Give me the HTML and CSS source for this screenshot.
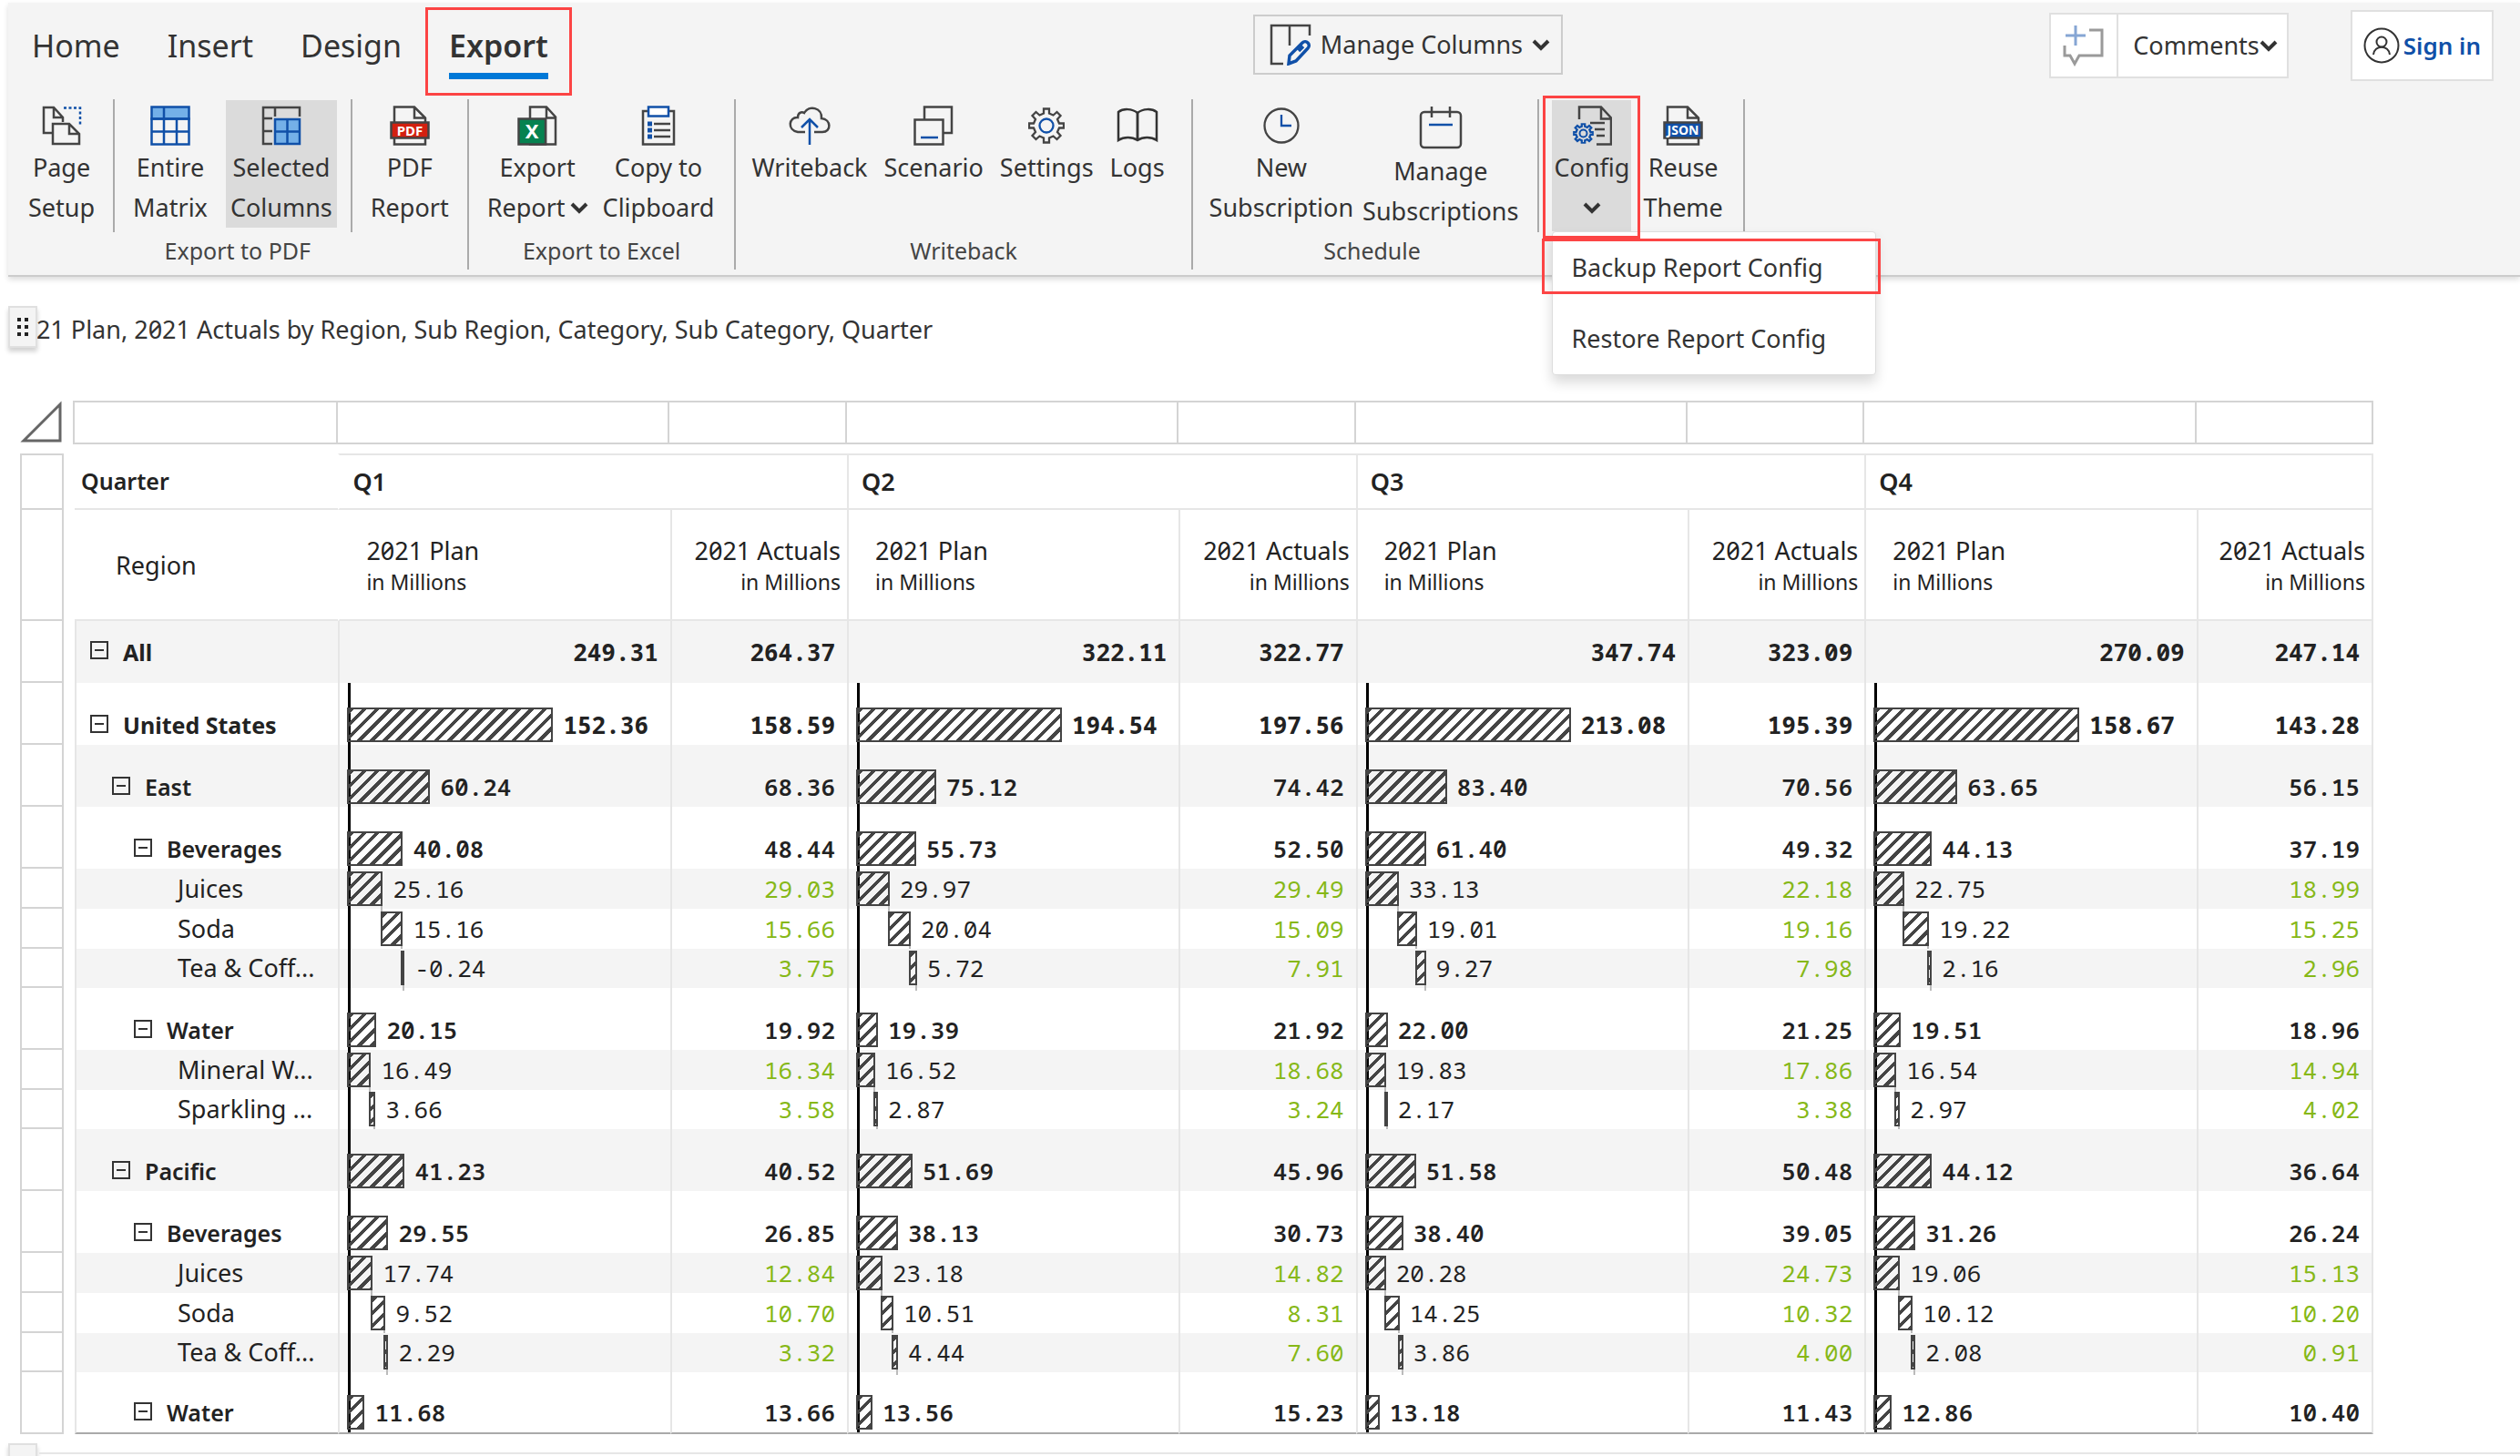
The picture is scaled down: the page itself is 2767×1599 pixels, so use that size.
FILE: index.html
```html
<!DOCTYPE html>
<html lang="en">
<head>
<meta charset="utf-8">
<title>Matrix report</title>
<link rel="stylesheet" href="styles.css">
</head>
<body>
<svg class="defs" aria-hidden="true">
  <symbol id="chevron" viewBox="0 0 20 13"><path d="M2 2l8 8 8-8" fill="none" stroke="#333" stroke-width="4"/></symbol>
  <symbol id="gear" viewBox="0 0 40 40"><path d="M17 1.500h6v5l4.500 2 4-3.500 4 4-3.500 4 2 4.500h5v5h-5l-2 4.500 3.500 4-4 4-4-3.500-4.500 2v5h-6v-5l-4.500-2-4 3.500-4-4 3.500-4-2-4.500h-5v-5h5l2-4.500-3.500-4 4-4 4 3.500 4.500-2z"/></symbol>
</svg>

<header class="ribbon">
  <div class="topbar">
    <nav class="tabs">
      <button class="tab">Home</button>
      <button class="tab">Insert</button>
      <button class="tab">Design</button>
      <button class="tab active">Export</button>
    </nav>
    <div class="space-before"></div>
    <button class="box manage">
      <svg width="46" height="46" viewBox="0 0 46 46" fill="none" stroke="#444" stroke-width="2.500"><path d="M44 13V2H2v42h13M22 2v22"/><path d="M21 44l1-9 14-14c4-4 10 2 6 6L29 41l-8 3zM32 30l5-5" stroke="#1050a8" stroke-width="3.500"/></svg>
      <span>Manage Columns</span>
      <svg class="chevron"><use href="#chevron"/></svg>
    </button>
    <div class="space-after"></div>
    <div class="comments">
      <button class="box light add" aria-label="Add comment">
        <svg width="46" height="46" viewBox="0 0 46 46" fill="none" stroke="#9a9a9a" stroke-width="3"><path d="M29 6h14v28H18l-5 9-5-9H2V23"/><path d="M3 12h22M14 1v22" stroke="#86a6d4"/></svg>
      </button>
      <button class="box light list">Comments<svg class="chevron"><use href="#chevron"/></svg></button>
    </div>
    <button class="box light signin">
      <svg width="40" height="40" viewBox="0 0 40 40" fill="none" stroke="#333" stroke-width="2"><circle cx="20" cy="20" r="18.500"/><circle cx="20" cy="16" r="5.500"/><path d="M11 30c1-11 17-11 18 0"/></svg>
      <span>Sign in</span>
    </button>
  </div>

  <div class="groups">
    <section class="group pdf">
      <div class="tools">
        <button class="tool">
          <svg width="44" height="44" viewBox="0 0 44 44" fill="none" stroke="#444" stroke-width="2.500"><path d="M12 30H2V2h11l10 11v5M13 2v11h10"/><path d="M12 20h18l11 11v11H12zM30 20v11h11" fill="#f4f4f4"/><path d="M24 2.500h18v18" stroke="#1050a8" stroke-dasharray="3 2.500"/></svg>
          <span>Page<br>Setup</span>
        </button>
        <i class="rule"></i>
        <button class="tool">
          <svg width="44" height="44" viewBox="0 0 44 44" fill="none" stroke="#1050a8" stroke-width="2.500"><path d="M1.500 1.500h41v13h-41z" fill="#74b0e8"/><path d="M1.500 14.500h41v28h-41zM15 1.500v41M29 15v27M1.500 28.500h41"/></svg>
          <span>Entire<br>Matrix</span>
        </button>
        <button class="tool selected">
          <svg width="44" height="44" viewBox="0 0 44 44" fill="none" stroke="#444" stroke-width="2.500"><path d="M42 12V2H2v40h10M15 2v10M2 14h10M2 28h10"/><path d="M15 15h27v27H15zM28.500 15v27M15 28.500h27" fill="#74b0e8" stroke="#1050a8"/></svg>
          <span>Selected<br>Columns</span>
        </button>
        <i class="rule"></i>
        <button class="tool">
          <svg width="44" height="44" viewBox="0 0 44 44" fill="#f4f4f4" stroke="#444" stroke-width="2.500"><path d="M5 42.500v-41h22l12 12v29zM27 1.500v12h12"/><path d="M1.500 18.500h41v17h-41z" fill="#d32010"/><text x="22" y="33" class="badge">PDF</text></svg>
          <span>PDF<br>Report</span>
        </button>
      </div>
      <h2>Export to PDF</h2>
    </section>

    <section class="group excel">
      <div class="tools">
        <button class="tool">
          <svg width="44" height="44" viewBox="0 0 44 44" fill="#f4f4f4" stroke="#444" stroke-width="2.500"><path d="M14 42.500v-41h18l10 11v30zM32 1.500v12h10M31 14v28"/><path d="M1.500 14.500H31v28H1.500z" fill="#068250"/><text x="16" y="36" class="badge large">X</text></svg>
          <span>Export<br>Report<svg class="chevron"><use href="#chevron"/></svg></span>
        </button>
        <button class="tool">
          <svg width="44" height="44" viewBox="0 0 44 44" fill="none" stroke="#444" stroke-width="2.500"><path d="M10 6H5v36.500h34V6h-5M17 20h18M17 27h18M17 34h18"/><path d="M11 1.500h22v10H11z" fill="#fff" stroke="#1050a8"/><path d="M10 20h5M10 27h5M10 34h5" stroke="#1050a8" stroke-width="5"/></svg>
          <span>Copy to<br>Clipboard</span>
        </button>
      </div>
      <h2>Export to Excel</h2>
    </section>

    <section class="group writeback">
      <div class="tools">
        <button class="tool">
          <svg width="46" height="44" viewBox="0 0 46 44" fill="none" stroke="#444" stroke-width="2.500"><path d="M18 29h-8C-2 27 0 12 10 13c0-5 4-7 7-5 5-9 20-6 19 6 11 1 11 15 1 15h-9"/><path d="M23 43V15M14 24l9-9 9 9" stroke="#1050a8"/></svg>
          <span>Writeback</span>
        </button>
        <button class="tool">
          <svg width="44" height="44" viewBox="0 0 44 44" fill="none" stroke="#444" stroke-width="2.500"><path d="M12 15V1.500h30V30H32"/><path d="M1.500 15.500h31v27h-31z"/><path d="M8 35h19" stroke="#1050a8"/></svg>
          <span>Scenario</span>
        </button>
        <button class="tool">
          <svg width="44" height="44" viewBox="-2 -2 44 44" fill="none" stroke="#444" stroke-width="2.300"><use href="#gear" width="40" height="40"/><circle cx="20" cy="20" r="7.500" stroke="#1050a8"/></svg>
          <span>Settings</span>
        </button>
        <button class="tool">
          <svg width="46" height="44" viewBox="0 0 46 44" fill="none" stroke="#333" stroke-width="2.500"><path d="M23 8C17 3 7 3 2 7v31c6-4 15-4 21 0 6-4 15-4 21 0V7C39 3 29 3 23 8zv30"/><path d="M23 8v30"/></svg>
          <span>Logs</span>
        </button>
      </div>
      <h2>Writeback</h2>
    </section>

    <section class="group schedule">
      <div class="tools">
        <button class="tool">
          <svg width="44" height="44" viewBox="0 0 44 44" fill="none" stroke="#444" stroke-width="2.300"><circle cx="22" cy="22" r="18.500"/><path d="M22 10v12h11" stroke="#1050a8"/></svg>
          <span>New<br>Subscription</span>
        </button>
        <button class="tool">
          <svg width="48" height="48" viewBox="0 0 48 48" fill="none" stroke="#444" stroke-width="2.500"><rect x="2" y="7" width="44" height="39" rx="4"/><path d="M14 1v12M34 1v12"/><path d="M11 21h26" stroke="#1050a8"/></svg>
          <span>Manage<br>Subscriptions</span>
        </button>
      </div>
      <h2>Schedule</h2>
    </section>

    <section class="group config">
      <div class="tools">
        <div class="dropdown">
          <button class="tool selected" aria-expanded="true">
            <svg width="44" height="44" viewBox="0 0 44 44" fill="none" stroke="#444" stroke-width="2.500"><path d="M8 15V1.500h24l11 12v29H27M32 1.500v13h11M20 19h16M25 26h11M27 33h9"/><g stroke="#1050a8"><svg x="0" y="18" width="25" height="25" viewBox="-2 -2 44 44" stroke-width="4"><use href="#gear" width="40" height="40"/></svg><circle cx="12.500" cy="30.500" r="4" stroke-width="2"/></g></svg>
            <span>Config<br><svg class="chevron"><use href="#chevron"/></svg></span>
          </button>
          <div class="menu">
            <button class="marked">Backup Report Config</button>
            <button>Restore Report Config</button>
          </div>
        </div>
        <button class="tool">
          <svg width="44" height="44" viewBox="0 0 44 44" fill="#f4f4f4" stroke="#444" stroke-width="2.500"><path d="M5 42.500v-41h22l12 12v29zM27 1.500v12h12"/><path d="M1.500 18.500h41v17h-41z" fill="#1050a8"/><text x="22" y="32" class="badge small">JSON</text></svg>
          <span>Reuse<br>Theme</span>
        </button>
      </div>
    </section>
  </div>
</header>

<main>
  <div class="title">
    <button class="handle" aria-label="Move title"><svg width="12" height="20" fill="#222"><path d="M0 0h4v4H0zM8 0h4v4H8zM0 8h4v4H0zM8 8h4v4H8zM0 16h4v4H0zM8 16h4v4H8z"/></svg></button>
    <h1>2021 Plan, 2021 Actuals by Region, Sub Region, Category, Sub Category, Quarter</h1>
  </div>

  <div class="matrix">
    <div class="columns">
      <svg width="46" height="46" viewBox="0 0 46 46" fill="none" stroke="#666" stroke-width="3"><path d="M44 4v40H4z"/></svg>
      <i></i><i></i><i></i><i></i><i></i><i></i><i></i><i></i><i></i>
    </div>
    <table>
      <colgroup><col class="c-sel"><col class="c-gap"><col class="c-name"><col class="c-plan"><col class="c-act"><col class="c-plan"><col class="c-act"><col class="c-plan"><col class="c-act"><col class="c-plan"><col class="c-act"></colgroup>
      <thead>
        <tr class="quarters"><td class="sel"></td><td></td><th class="corner">Quarter</th><th colspan="2">Q1</th><th colspan="2">Q2</th><th colspan="2">Q3</th><th colspan="2">Q4</th></tr>
        <tr class="measures"><td class="sel"></td><td></td><th class="corner">Region</th>
          <th>2021 Plan<small>in Millions</small></th><th class="num">2021 Actuals<small>in Millions</small></th>
          <th>2021 Plan<small>in Millions</small></th><th class="num">2021 Actuals<small>in Millions</small></th>
          <th>2021 Plan<small>in Millions</small></th><th class="num">2021 Actuals<small>in Millions</small></th>
          <th>2021 Plan<small>in Millions</small></th><th class="num">2021 Actuals<small>in Millions</small></th></tr>
      </thead>
      <tbody id="rows"></tbody>
    </table>
  </div>
  <div class="footer"><button class="handle" aria-label="Move footer"></button></div>
</main>
<script src="matrix.js"></script>
</body>
</html>
```
FILE: styles.css
```css
* { box-sizing: border-box; }
html, body { height: 100%; }
body {
  margin: 0;
  overflow: hidden;
  background: #fff;
  color: #333;
  font: 27px/44px "Noto Sans", sans-serif;
  font-variant-numeric: slashed-zero;
}
button { margin: 0; padding: 0; border: 0; background: none; color: inherit; font: inherit; }
h1, h2 { margin: 0; font-weight: 400; }
svg { flex: none; }
.defs { position: absolute; width: 0; height: 0; }
.chevron { width: 20px; height: 13px; }

/* Ribbon */
.ribbon {
  position: relative;
  z-index: 2;
  margin: 3px 0 0 9px;
  padding: 5px 0 6px;
  background: #f4f4f4;
  border-bottom: 2px solid #ccc;
  box-shadow: 0 3px 6px rgba(0, 0, 0, .14);
}
.topbar { display: flex; padding-right: 29px; height: 101px; align-items: flex-start; }
.tabs { display: flex; }
.tab { position: relative; display: flex; padding: 0 26px; font-size: 34px; line-height: 84px; height: 97px; }
.tab.active { font-weight: 600; outline: 3px solid #fc4444; outline-offset: -3px; }
.tab.active::after { content: ""; position: absolute; left: 26px; right: 26px; bottom: 18px; height: 7px; background: #0078d7; }
.space-before { flex: 7; }
.space-after { flex: 5; }
.box { display: flex; align-items: center; border: 2px solid #ccc; }
.light { background: #fff; border-color: #e0e0e0; }
.manage { height: 66px; margin-top: 8px; padding: 0 12px 0 16px; gap: 10px; }
.comments { display: flex; margin-top: 6px; }
.comments .box { height: 72px; }
.comments .add { width: 76px; justify-content: center; }
.comments .list { margin-left: -2px; padding: 0 10px 0 16px; }
.signin { height: 78px; margin: 3px 0 0 68px; padding: 0 12px; gap: 4px; font-size: 26px; font-weight: 600; color: #1050a8; }

.groups { display: flex; }
.group { border-right: 2px solid #aaa; height: 187px; }
.group h2 { font-size: 25px; line-height: 41px; text-align: center; color: #444; }
.tools { display: flex; height: 146px; padding-top: 1px; align-items: flex-start; }
.tool { display: flex; flex-direction: column; align-items: center; height: 140px; padding: 6px 5px 0; }
.tool > svg { margin-bottom: 2px; }
.tool .chevron { margin-left: 5px; vertical-align: 3px; }
.selected { background: #dbdbdb; }
.rule { width: 2px; height: 146px; margin-top: -1px; background: #aaa; }
.pdf .tools { gap: 15px; padding: 1px 15px 0 17px; }
.excel .tools { gap: 6px; padding: 1px 17px 0 15px; }
.writeback .tools { gap: 8px; padding: 1px 24px 0 12px; }
.schedule { border: 0; padding-left: 13px; }
.schedule .tools { padding-right: 16px; border-right: 2px solid #aaa; }
.config .tools { gap: 8px; padding: 1px 17px 0 14px; }
.badge { fill: #fff; stroke: none; font-size: 15px; font-weight: 700; text-anchor: middle; }
.badge.small { font-size: 14px; }
.badge.large { font-size: 22px; }

.dropdown { position: relative; }
.dropdown .tool { height: 144px; padding: 6px 2px; }
.dropdown .tool .chevron { margin-left: 0; }
.dropdown::after { content: ""; position: absolute; inset: -5px -10px -8px; border: 3px solid #fc4444; }
.menu {
  position: absolute;
  top: 144px;
  left: 0;
  display: flex;
  flex-direction: column;
  width: 356px;
  background: #fff;
  border: 1px solid #ddd;
  border-radius: 4px;
  box-shadow: 0 8px 14px rgba(0, 0, 0, .15);
}
.menu button { position: relative; padding: 0 0 0 20px; text-align: left; line-height: 78px; }
.menu .marked::after { content: ""; position: absolute; inset: 7px -6px 10px -12px; border: 3px solid #fc4444; }

/* Report title */
.title { position: relative; margin: 32px 0 0 9px; height: 52px; }
h1 { font-size: 27px; line-height: 52px; }
.handle {
  position: absolute;
  left: 0;
  top: 0;
  display: flex;
  align-items: center;
  justify-content: center;
  width: 32px;
  height: 46px;
  background: #f4f4f4;
  border: 2px solid #e0e0e0;
  box-shadow: 0 4px 5px rgba(0, 0, 0, .18);
}

/* Matrix */
.matrix { margin: 52px 161px 0 22px; color: #222; }
.columns { display: grid; grid-template-columns: 58px 291px repeat(4, 364fr 194fr); height: 48px; margin-bottom: 10px; }
.columns i { border: solid #d4d4d4; border-width: 2px 2px 2px 0; }
.columns svg + i { border-left-width: 2px; }
table { width: 100%; table-layout: fixed; border-spacing: 0; }
td, th { padding: 0; font-weight: 400; text-align: left; white-space: nowrap; }
.c-sel { width: 48px; }
.c-gap { width: 12px; }
.c-name { width: 289px; }
.c-plan { width: 364px; }
.c-act { width: 194px; }
.sel { border: solid #d4d4d4; border-width: 0 2px 2px; }
.quarters .sel { border-top-width: 2px; }
.quarters { height: 62px; }
.quarters th { padding-left: 14px; border: solid #e6e6e6; border-width: 2px 0 2px 2px; font-size: 27px; font-weight: 600; }
.quarters th:last-child, tbody td:last-child, .measures th:last-child { border-right: 2px solid #e6e6e6; }
.quarters .corner { border-width: 0 0 2px; padding-left: 7px; font-size: 25px; }
.measures { height: 122px; }
.measures th { padding: 4px 0 0 29px; border: solid #e6e6e6; border-width: 0 0 2px 2px; line-height: 35px; }
.measures th:nth-child(4), .quarters th:nth-child(4) { border-left-color: transparent; }
.measures .corner { padding: 0 0 0 45px; border-left: 0; }
.measures .num { padding: 4px 7px 0 0; text-align: right; }
small { display: block; font-size: 23px; }
.num { text-align: right; }

tbody { line-height: 42px; }
tbody tr { height: 68px; }
tbody tr.leaf { height: 44px; }
tbody tr.leaf.closing { height: 43px; }
tbody tr:nth-child(odd) td:nth-child(n + 3), tbody tr:nth-child(odd) th { background: #f4f4f4; }
tbody td, tbody th { vertical-align: bottom; padding-bottom: 1px; }
tbody td:nth-child(n + 4), tbody th { border-left: 2px solid #e6e6e6; }
tbody .num { padding-right: 13px; }
tbody .total > * { vertical-align: middle; }
tbody td { font-family: "Noto Sans Mono", monospace; font-size: 26px; font-weight: 600; }
tbody .total td, tbody .country td { font-weight: 700; }
tbody .leaf td { font-weight: 400; }
.leaf .num { color: #86b817; }
tbody th { font-size: 25px; font-weight: 600; }
.total th, .country th { font-weight: 700; }
.leaf th { font-size: 27px; font-weight: 400; }
tbody tr:last-child > :nth-child(n + 3) { border-bottom: 2px solid #aaa; }

.name { display: flex; align-items: center; gap: 16px; padding-left: 15px; }
.level-2 .name { padding-left: 39px; }
.level-3 .name { padding-left: 63px; }
.leaf .name { padding-left: 111px; }
.toggle { display: flex; width: 20px; height: 20px; margin-bottom: 3px; align-items: center; justify-content: center; border: 2px solid #333; }
.toggle::before { content: ""; width: 10px; height: 2px; background: #333; }

.plan { position: relative; }
.plan::before { content: ""; position: absolute; left: 9px; top: 0; bottom: 0; width: 3px; background: #000; }
.track { position: relative; display: flex; align-items: center; gap: 11px; padding-left: 8px; }
.bar {
  position: relative;
  height: 38px;
  border: 2px solid #444;
  background: repeating-linear-gradient(135deg, #444 0 4px, transparent 4px 10px);
}
.leaf .bar::after { content: ""; position: absolute; right: -2px; top: 36px; width: 2px; height: 6px; background: #bbb; }

.footer { position: relative; height: 20px; margin: 10px 0 0 9px; }
.footer::after { content: ""; position: absolute; left: 34px; right: 0; top: 10px; height: 2px; background: #e6e6e6; }
```
FILE: matrix.js
```
// Each row: style, label, then plan and actuals for the four quarters.
const rows = [
  ['total', 'All', 249.31, 264.37, 322.11, 322.77, 347.74, 323.09, 270.09, 247.14],
  ['country', 'United States', 152.36, 158.59, 194.54, 197.56, 213.08, 195.39, 158.67, 143.28],
  ['level-2', 'East', 60.24, 68.36, 75.12, 74.42, 83.40, 70.56, 63.65, 56.15],
  ['level-3', 'Beverages', 40.08, 48.44, 55.73, 52.50, 61.40, 49.32, 44.13, 37.19],
  ['leaf', 'Juices', 25.16, 29.03, 29.97, 29.49, 33.13, 22.18, 22.75, 18.99],
  ['leaf', 'Soda', 15.16, 15.66, 20.04, 15.09, 19.01, 19.16, 19.22, 15.25],
  ['leaf closing', 'Tea & Coff...', -0.24, 3.75, 5.72, 7.91, 9.27, 7.98, 2.16, 2.96],
  ['level-3', 'Water', 20.15, 19.92, 19.39, 21.92, 22.00, 21.25, 19.51, 18.96],
  ['leaf', 'Mineral W...', 16.49, 16.34, 16.52, 18.68, 19.83, 17.86, 16.54, 14.94],
  ['leaf closing', 'Sparkling ...', 3.66, 3.58, 2.87, 3.24, 2.17, 3.38, 2.97, 4.02],
  ['level-2', 'Pacific', 41.23, 40.52, 51.69, 45.96, 51.58, 50.48, 44.12, 36.64],
  ['level-3', 'Beverages', 29.55, 26.85, 38.13, 30.73, 38.40, 39.05, 31.26, 26.24],
  ['leaf', 'Juices', 17.74, 12.84, 23.18, 14.82, 20.28, 24.73, 19.06, 15.13],
  ['leaf', 'Soda', 9.52, 10.70, 10.51, 8.31, 14.25, 10.32, 10.12, 10.20],
  ['leaf closing', 'Tea & Coff...', 2.29, 3.32, 4.44, 7.60, 3.86, 4.00, 2.08, 0.91],
  ['level-3', 'Water', 11.68, 13.66, 13.56, 15.23, 13.18, 11.43, 12.86, 10.40],
];
const FULL = 224; // length of a quarter's longest bar
const longest = rows[1];
const offsets = [];

const html = rows.map(([kind, label, ...values]) => {
  const leaf = kind.startsWith('leaf');
  const cells = values.map((value, i) => {
    const text = value.toFixed(2);
    if (i % 2 || kind === 'total') return `<td class="num">${text}</td>`;
    const start = leaf ? offsets[i] : 0;
    const scale = FULL / longest[i + 2];
    const left = Math.round(Math.min(start, start + value) * scale);
    const width = Math.max(2, Math.round(Math.abs(value) * scale) + 2);
    offsets[i] = leaf ? start + value : 0;
    return `<td class="plan"><div class="track"><span class="bar" style="margin-left:${left}px;width:${width}px"></span>${text}</div></td>`;
  }).join('');
  const toggle = leaf ? '' : '<i class="toggle"></i>';
  return `<tr class="${kind}"><td class="sel"></td><td></td><th><div class="name">${toggle}<span>${label.replace('&', '&amp;')}</span></div></th>${cells}</tr>`;
}).join('');
document.getElementById('rows').innerHTML = html;
```
